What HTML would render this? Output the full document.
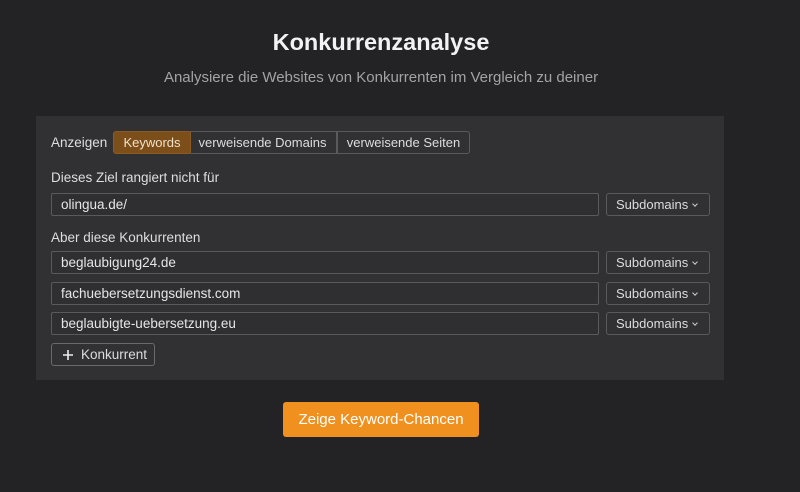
<!DOCTYPE html>
<html><head><meta charset="utf-8"><style>
body{margin:0;width:800px;height:492px;background:#232326;font-family:"Liberation Sans",sans-serif;color:#e6e6e6;position:relative;overflow:hidden}
.a{position:absolute}
h1{position:absolute;top:29px;left:0;width:762px;text-align:center;margin:0;font-size:23.5px;font-weight:bold;color:#f2f2f2}
.sub{top:69px;left:0;width:762px;text-align:center;font-size:15px;color:#a3a3a3}
.panel{left:36px;top:116px;width:688px;height:264px;background:#313133}
.lbl{font-size:13.5px;color:#dedede}
.tab{top:131px;height:21px;border:1px solid #5a5a5c;font-size:13px;line-height:21px;text-align:center;color:#dcdcdc;box-sizing:content-box}
.inp{left:51px;border:1px solid #5a5a5c;border-radius:2px;font-size:13.5px;padding-left:9px;box-sizing:border-box;width:548px;height:23px;line-height:21px;background:#2f2f31}
.sd{left:606px;width:104px;height:23px;border:1px solid #5a5a5c;border-radius:3px;box-sizing:border-box;font-size:13px;line-height:21px;padding-left:9px;color:#dcdcdc}
.sd:after{content:"";position:absolute;right:12px;top:8px;width:3px;height:3px;border-right:1px solid #ccc;border-bottom:1px solid #ccc;transform:rotate(45deg)}
.btn{left:283px;top:402px;width:196px;height:35px;background:#f0901f;border-radius:3px;color:#fff;font-size:15px;text-align:center;line-height:35px}
</style></head><body>
<h1>Konkurrenzanalyse</h1>
<div class="a sub">Analysiere die Websites von Konkurrenten im Vergleich zu deiner</div>
<div class="a panel"></div>
<div class="a lbl" style="left:51px;top:135px">Anzeigen</div>
<div class="a tab" style="left:113px;width:76px;background:#7b4e1a;border-color:#8a5a22;border-radius:3px 0 0 3px;color:#f0e0c8">Keywords</div>
<div class="a tab" style="left:189px;width:147px;border-left:none">verweisende Domains</div>
<div class="a tab" style="left:337px;width:131px;border-left:1px solid #5a5a5c;border-radius:0 3px 3px 0">verweisende Seiten</div>
<div class="a lbl" style="left:51px;top:170px">Dieses Ziel rangiert nicht für</div>
<div class="a inp" style="top:193px">olingua.de/</div>
<div class="a sd" style="top:193px">Subdomains</div>
<div class="a lbl" style="left:51px;top:230px">Aber diese Konkurrenten</div>
<div class="a inp" style="top:251px">beglaubigung24.de</div>
<div class="a sd" style="top:251px">Subdomains</div>
<div class="a inp" style="top:282px">fachuebersetzungsdienst.com</div>
<div class="a sd" style="top:282px">Subdomains</div>
<div class="a inp" style="top:312px">beglaubigte-uebersetzung.eu</div>
<div class="a sd" style="top:312px">Subdomains</div>
<div class="a" style="left:51px;top:343px;width:104px;height:23px;border:1px solid #6a6a6c;border-radius:3px;box-sizing:border-box;font-size:13.5px;line-height:21px;color:#dcdcdc">
<svg class="a" style="left:10px;top:5px" width="12" height="12" viewBox="0 0 12 12"><path d="M6 1V11M1 6H11" stroke="#eee" stroke-width="1.6"/></svg>
<span class="a" style="left:29px;top:0">Konkurrent</span></div>
<div class="a btn">Zeige Keyword-Chancen</div>
</body></html>
